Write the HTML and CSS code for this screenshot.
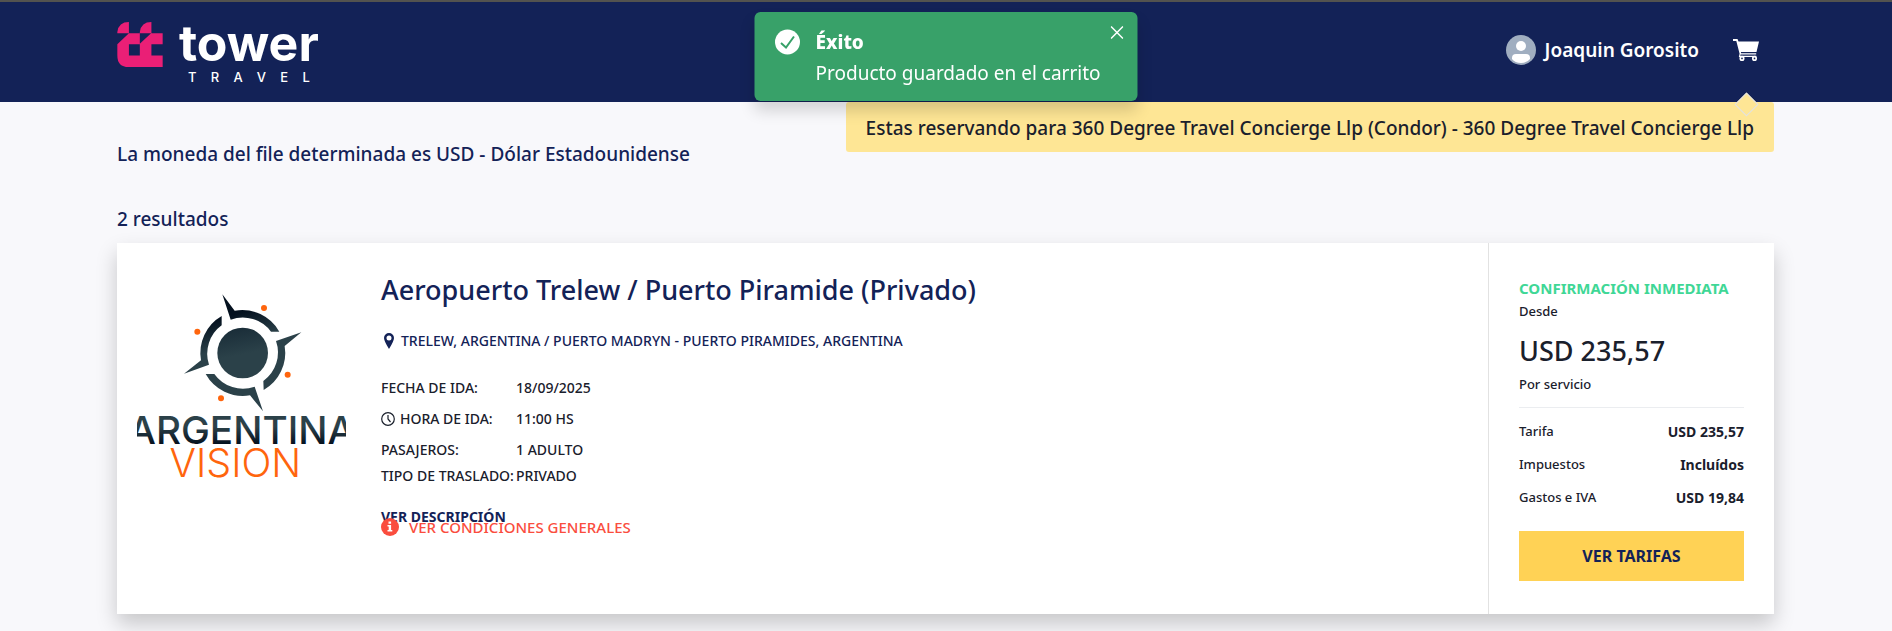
FILE: index.html
```html
<!DOCTYPE html>
<html lang="es">
<head>
<meta charset="utf-8">
<title>Tower Travel</title>
<link rel="stylesheet" href="styles.css">
</head>
<body>
<header class="header">
  <a class="brand" href="#" aria-label="Tower Travel">
    <svg class="brand-mark" viewBox="0 0 137 136" aria-hidden="true"><path fill="#ea1f76" d="M0 34V30Q4 0 35 0V34ZM68 34V30Q72 0 103 0V34ZM35 34H68V66L102 34H137V67H103V101H137V136H34Q0 136 0 101V67ZM35 67V101H68V67Z"/></svg>
    <span class="brand-name"><span class="brand-word">tower</span>
      <span class="brand-sub"><span>T</span><span>R</span><span>A</span><span>V</span><span>E</span><span>L</span></span></span>
  </a>
  <nav class="user">
    <a class="user-link" href="#">
      <svg class="avatar" viewBox="0 0 30 30" aria-hidden="true"><circle cx="15" cy="15" r="15" fill="#a0aec0"/><circle cx="15" cy="11" r="5" fill="#fff"/><path fill="#fff" d="M6 24v-1q0-4 4-4h10q4 0 4 4v1q-3 4-9 4t-9-4z"/></svg>
      <span>Joaquin Gorosito</span>
    </a>
    <a class="cart" href="#" aria-label="Carrito">
      <svg viewBox="0 0 26 22" aria-hidden="true"><path fill="#fff" d="M0 0h4.500l1 2.500H26L23.500 13H7.800l.4 1.200h15V15.500H7.500l-.2 1.300h16v1.200H5.800l.8-3.200L3.300 2H0z"/><g fill="#132257" stroke="#fff" stroke-width="1.700"><circle cx="9" cy="19.400" r="1.700"/><circle cx="21.500" cy="19.400" r="1.700"/></g></svg>
    </a>
  </nav>
</header>
<main class="page">
  <div class="intro">
    <p class="currency">La moneda del file determinada es USD - Dólar Estadounidense</p>
    <p class="notice">Estas reservando para 360 Degree Travel Concierge Llp (Condor) - 360 Degree Travel Concierge Llp</p>
  </div>
  <p class="count">2 resultados</p>
  <article class="card">
    <svg class="provider" viewBox="111 123 627 627" role="img" aria-label="Argentina Vision">
      <defs>
        <linearGradient id="ring" gradientUnits="userSpaceOnUse" x1="380" y1="230" x2="430" y2="400"><stop offset="0" stop-color="#04111f"/><stop offset=".5" stop-color="#2b4149"/></linearGradient>
        <linearGradient id="disk" x1="0" y1="0" x2=".2" y2="1"><stop offset="0" stop-color="#172a36"/><stop offset=".6" stop-color="#2b4149"/></linearGradient>
        <linearGradient id="word" gradientUnits="userSpaceOnUse" x1="425" y1="560" x2="425" y2="612"><stop offset="0" stop-color="#2b4149"/><stop offset="1" stop-color="#04111f"/></linearGradient>
      </defs>
      <g fill="url(#ring)">
        <path d="M367 163L404 212A128 128 0 0 1 538 275H513A105 105 0 0 0 392 239Z"/>
        <path d="M604 277L554 318A128 128 0 0 1 491 450L490 423A105 105 0 0 0 528 303Z"/>
        <path d="M489 514L450 466A128 128 0 0 1 317 402H343A105 105 0 0 0 464 440Z"/>
        <path d="M252 401L303 361A128 128 0 0 1 365 228V256A105 105 0 0 0 327 374Z"/>
      </g>
      <circle cx="428" cy="339" r="76" fill="url(#disk)"/>
      <g fill="#ff650d"><circle cx="492" cy="204" r="9"/><circle cx="292" cy="275" r="9"/><circle cx="563" cy="404" r="9"/><circle cx="363" cy="475" r="9"/></g>
      <text class="provider-top" x="425" y="612" text-anchor="middle" fill="url(#word)">ARGENTINA</text>
      <text class="provider-bottom" x="406" y="710" text-anchor="middle" fill="#ff650d">VISION</text>
    </svg>
    <section class="details">
      <h2 class="title">Aeropuerto Trelew / Puerto Piramide (Privado)</h2>
      <p class="place"><svg viewBox="0 0 10 16" aria-hidden="true"><path fill="#132257" fill-rule="evenodd" d="M5 0a5 5 0 0 1 5 5q0 3-5 11Q0 8 0 5a5 5 0 0 1 5-5zm0 2.500a2.500 2.500 0 1 0 0 5 2.500 2.500 0 0 0 0-5z"/></svg>TRELEW, ARGENTINA / PUERTO MADRYN - PUERTO PIRAMIDES, ARGENTINA</p>
      <dl class="facts">
        <dt>FECHA DE IDA:</dt><dd>18/09/2025</dd>
        <dt><svg class="clock" viewBox="0 0 14 14" fill="none" stroke="#1a202c" stroke-width="1.200" aria-hidden="true"><circle cx="7" cy="7" r="6.300"/><path d="M7 3v4l2.500 3"/></svg>HORA DE IDA:</dt><dd>11:00 HS</dd>
        <dt>PASAJEROS:</dt><dd>1 ADULTO</dd>
        <dt class="tight">TIPO DE TRASLADO:</dt><dd class="tight">PRIVADO</dd>
      </dl>
      <a class="describe" href="#">VER DESCRIPCIÓN</a>
      <a class="terms" href="#"><svg viewBox="0 0 18 18" aria-hidden="true"><circle cx="9" cy="9" r="9" fill="#fa4d3e"/><path fill="#fff" d="M7.500 3.500h2.600v2.300H7.500zM6.500 7h3.600v5h1.200v1.500H6.500V12h1.200V8.500H6.500z"/></svg>VER CONDICIONES GENERALES</a>
    </section>
    <aside class="price">
      <p class="confirm">CONFIRMACIÓN INMEDIATA</p>
      <p class="small">Desde</p>
      <p class="amount">USD 235,57</p>
      <p class="small">Por servicio</p>
      <dl class="fees">
        <div><dt>Tarifa</dt><dd>USD 235,57</dd></div>
        <div><dt>Impuestos</dt><dd>Incluídos</dd></div>
        <div><dt>Gastos e IVA</dt><dd>USD 19,84</dd></div>
      </dl>
      <button class="rates" type="button">VER TARIFAS</button>
    </aside>
  </article>
</main>
<div class="toast" role="status">
  <svg class="toast-icon" viewBox="0 0 26 26" aria-hidden="true"><circle cx="13" cy="13" r="12.500" fill="#fff"/><path d="M6.500 14l5 4.500 8-11" fill="none" stroke="#38a169" stroke-width="2"/></svg>
  <div><strong class="toast-title">Éxito</strong><p class="toast-text">Producto guardado en el carrito</p></div>
  <button class="toast-close" type="button" aria-label="Cerrar"><svg viewBox="0 0 12 12" aria-hidden="true"><path d="M.5.5l11 11M11.500.5l-11 11" stroke="#fff" stroke-width="1.400"/></svg></button>
</div>
</body>
</html>
```
FILE: styles.css
```css
* { box-sizing: border-box; }
body, p, h2, dl, dd { margin: 0; }
body {
  background: #f8f8fb;
  color: #1a202c;
  font-family: "Noto Sans", "Open Sans", sans-serif;
  font-weight: 500;
  overflow: hidden;
}
a { color: inherit; text-decoration: none; }
button { font: inherit; border: 0; cursor: pointer; }
svg { display: block; flex: none; }

.header {
  display: flex;
  justify-content: space-between;
  height: 102px;
  padding: 0 118px 0 117px;
  background: #132257;
  border-top: 2px solid #53534f;
  color: #fff;
}
.brand { display: flex; gap: 16px; padding-top: 20px; }
.brand-mark { width: 46px; height: 45px; }
.brand-name { display: flex; flex-direction: column; font-family: Inter, sans-serif; }
.brand-word { font-size: 50px; font-weight: 700; line-height: 42px; }
.brand-sub { display: flex; justify-content: space-between; padding: 5px 9px 0; font-size: 13px; line-height: 16px; }
.user { display: flex; align-items: center; gap: 34px; padding: 0 15px 5px 0; }
.user-link { display: flex; align-items: center; gap: 9px; font-size: 19px; font-weight: 600; line-height: 26px; }
.avatar { width: 30px; height: 30px; }
.cart svg { width: 26px; height: 22px; }

.page { padding: 0 118px 40px 117px; }
.intro { display: flex; justify-content: space-between; align-items: flex-start; height: 100px; }
.currency { padding-top: 38px; color: #132257; font-size: 19px; line-height: 28px; }
.notice {
  position: relative;
  padding: 12px 20px 10px;
  background: #fee695;
  border-radius: 3px;
  font-size: 19px;
  line-height: 28px;
}
.notice::before {
  content: "";
  position: absolute;
  top: -6px;
  right: 19px;
  width: 15px;
  height: 15px;
  background: #fee695;
  border: 1px solid #e2e2e2;
  transform: rotate(45deg);
}
.count { padding: 1px 0 7px; color: #132257; font-size: 19px; line-height: 33px; }

.card { display: flex; background: #fff; box-shadow: 0 10px 20px rgba(0, 0, 0, .2); }
.provider { width: 209px; height: 209px; margin: 38px 0 0 20px; }
.provider-top { font: 500 116px Inter, sans-serif; }
.provider-bottom { font: 300 118px Inter, sans-serif; }

.details { flex: 1; padding: 27px 35px; }
.title { color: #132257; font-size: 27px; font-weight: 500; line-height: 40px; }
.place { display: flex; align-items: center; gap: 7px; padding: 21px 0 0 3px; color: #132257; font-size: 14px; line-height: 20px; }
.place svg { width: 10px; height: 16px; }
.facts { display: grid; grid-template-columns: 135px 1fr; padding-top: 21px; font-size: 14px; line-height: 31px; }
.facts dt { display: flex; align-items: center; gap: 5px; white-space: nowrap; }
.facts .tight { line-height: 21px; }
.clock { width: 14px; height: 14px; }
.describe { display: block; padding-top: 21px; color: #132257; font-size: 14px; font-weight: 700; line-height: 20px; }
.terms { display: flex; align-items: center; gap: 10px; margin-top: -10px; color: #fa4d3e; font-size: 15px; line-height: 20px; position: relative; }
.terms svg { width: 18px; height: 18px; }

.price { width: 286px; padding: 33px 30px; border-left: 1px solid #e2e2e2; }
.confirm { color: #3fd796; font-size: 15px; font-weight: 700; line-height: 25px; white-space: nowrap; }
.small { font-size: 13px; line-height: 20px; }
.amount { padding: 10px 0 3px; font-size: 27px; line-height: 40px; }
.fees { margin-top: 13px; padding: 7px 0 17px; border-top: 1px solid #ebedf0; font-size: 13px; line-height: 33px; }
.fees div { display: flex; justify-content: space-between; }
.fees dd { font-size: 14px; font-weight: 700; }
.rates { display: block; width: 100%; padding: 13px; background: #ffd255; color: #132257; font-size: 16px; font-weight: 700; line-height: 24px; }

.toast {
  position: fixed;
  top: 12px;
  left: 50%;
  transform: translateX(-50%);
  display: flex;
  gap: 15px;
  padding: 15px 37px 12px 20px;
  background: #38a169;
  border-radius: 6px;
  box-shadow: 0 10px 15px rgba(0, 0, 0, .15);
  color: #fff;
  white-space: nowrap;
}
.toast-icon { width: 26px; height: 26px; margin-top: 2px; }
.toast-title { display: block; font-size: 19px; font-weight: 800; line-height: 31px; }
.toast-text { font-size: 19px; font-weight: 400; line-height: 31px; }
.toast-close { position: absolute; top: 10px; right: 10px; padding: 4px; background: none; }
.toast-close svg { width: 13px; height: 13px; }
```
